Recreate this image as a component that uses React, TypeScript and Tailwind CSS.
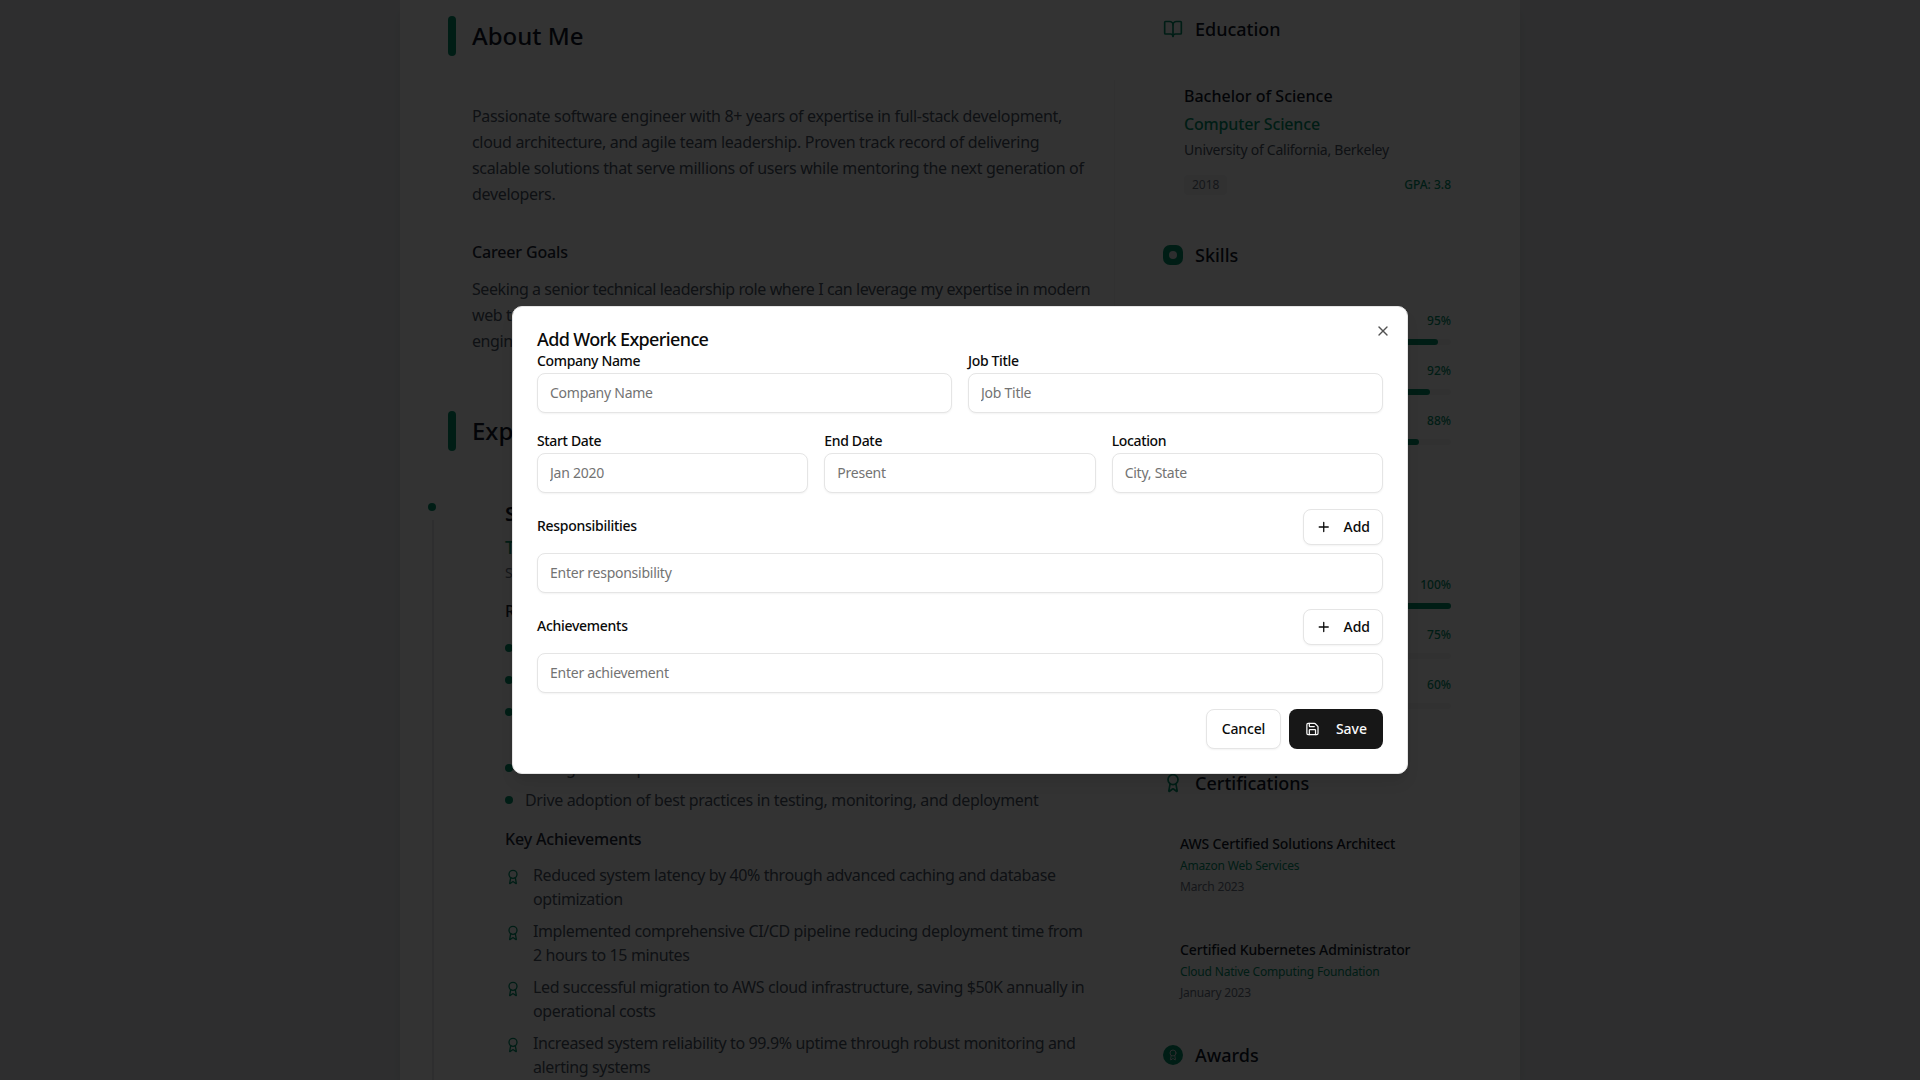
import React from 'react';
import { Award, BookOpen, Plus, Save, X } from 'lucide-react';

const fieldClass =
  'h-10 w-full rounded-lg border border-[#e5e5e5] bg-white px-3 pb-px text-sm tracking-[-0.018em] text-[#0a0a0a] placeholder:text-[#737373] shadow-xs outline-none';

const Field: React.FC<{ label: string; placeholder: string }> = ({ label, placeholder }) => (
  <div>
    <label className="mb-0.5 block h-5 text-sm leading-5 font-medium tracking-[-0.025em] text-[#0a0a0a]">{label}</label>
    <input className={fieldClass} placeholder={placeholder} />
  </div>
);

const SectionHeading: React.FC<{ title: string }> = ({ title }) => (
  <div className="flex h-10 items-center gap-4">
    <div className="h-10 w-2 rounded-full bg-[#00906a]" />
    <h2 className="text-2xl font-medium text-gray-900">{title}</h2>
  </div>
);

const SideHeading: React.FC<{ title: string; icon: React.ReactNode }> = ({ title, icon }) => (
  <div className="flex h-6 items-center gap-3">
    <div className="flex w-5 shrink-0 justify-center">{icon}</div>
    <h3 className="text-lg font-medium text-gray-900">{title}</h3>
  </div>
);

const SkillBar: React.FC<{ name: string; level: number }> = ({ name, level }) => (
  <div>
    <div className="flex h-5 items-center justify-between text-xs">
      <span className="font-medium text-gray-700">{name}</span>
      <span className="font-medium text-[#00906a]">{level}%</span>
    </div>
    <div className="mt-2 h-1.5 rounded-full bg-gray-100">
      <div className="h-full rounded-full bg-[#00906a]" style={{ width: `${level}%` }} />
    </div>
  </div>
);

const CertCard: React.FC<{ title: string; issuer: string; date: string }> = ({ title, issuer, date }) => (
  <div className="p-[17px]">
    <p className="h-5 text-sm leading-5 font-medium tracking-[-0.01em] text-gray-900">{title}</p>
    <p className="mt-0.5 h-5 text-xs leading-5 tracking-[-0.016em] text-[#00906a]">{issuer}</p>
    <p className="mt-px h-5 text-xs leading-5 tracking-[-0.016em] text-gray-500">{date}</p>
  </div>
);

const bullets = [
  'Lead a team of engineers building distributed web platforms',
  'Architect microservices on cloud infrastructure',
  'Partner with product and design to define the technical roadmap and guide delivery across multiple teams',
  'Manage team sprints',
  'Drive adoption of best practices in testing, monitoring, and deployment',
];

const achievements = [
  'Reduced system latency by 40% through advanced caching and database optimization',
  'Implemented comprehensive CI/CD pipeline reducing deployment time from 2 hours to 15 minutes',
  'Led successful migration to AWS cloud infrastructure, saving $50K annually in operational costs',
  'Increased system reliability to 99.9% uptime through robust monitoring and alerting systems',
];

export default function App() {
  return (
    <div className="relative h-screen overflow-hidden bg-gray-200 font-['Noto_Sans',sans-serif]">
      {/* Resume page, scrolled */}
      <div className="mx-auto flex h-full w-[1120px] gap-[48px] bg-white pt-4 pl-12 shadow-lg">
        <main className="w-[667px] shrink-0">
          <SectionHeading title="About Me" />
          <div className="mt-6 h-[298px] border-r border-gray-100 py-[23px] pr-3 pl-6">
            <p className="pr-[6px] leading-[26px] tracking-[-0.02em] text-gray-600">
              Passionate software engineer with 8+ years of expertise in full-stack development, cloud architecture,
              and agile team leadership. Proven track record of delivering scalable solutions that serve millions of
              users while mentoring the next generation of developers.
            </p>
            <h4 className="mt-[33px] font-medium tracking-[-0.01em] text-gray-800">Career Goals</h4>
            <p className="mt-3 leading-[26px] tracking-[-0.026em] text-gray-600">
              Seeking a senior technical leadership role where I can leverage my expertise in modern web technologies
              to drive innovation, mentor talent, and build high-performing engineering teams.
            </p>
          </div>
          <div className="mt-[33px]">
            <SectionHeading title="Experience" />
          </div>

          <div className="relative mt-[49px] pl-[57px]">
            <div className="absolute top-[3px] left-[-20px] h-2 w-2 rounded-full bg-[#00906a]" />
            <div className="absolute top-5 bottom-[-400px] left-[-16px] w-0.5 bg-gray-200" />
            <h3 className="text-xl leading-7 font-semibold text-gray-900">Senior Software Engineer</h3>
            <p className="mt-[5px] text-lg leading-7 font-medium text-[#00906a]">TechCorp Solutions</p>
            <p className="mt-0.5 text-sm leading-5 text-gray-500">San Francisco, CA</p>
            <h4 className="mt-4 font-medium tracking-[-0.01em] text-gray-800">Responsibilities</h4>
            <ul className="mt-[13px] flex flex-col gap-2">
              {bullets.map((item) => (
                <li key={item} className="flex leading-6 tracking-[-0.021em] text-gray-600">
                  <span className="mt-2 mr-3 h-2 w-2 shrink-0 rounded-full bg-[#00906a]" />
                  <span>{item}</span>
                </li>
              ))}
            </ul>
            <h4 className="mt-[15px] font-medium tracking-[-0.01em] text-gray-800">Key Achievements</h4>
            <ul className="mt-3 flex flex-col gap-2">
              {achievements.map((item) => (
                <li key={item} className="flex gap-3 pr-[22px] leading-6 tracking-[-0.024em] text-gray-600">
                  <Award className="mt-[6px] h-4 w-4 shrink-0 text-[#00906a]" />
                  <span>{item}</span>
                </li>
              ))}
            </ul>
          </div>
        </main>

        <aside className="mt-px w-[309px] shrink-0">
          <SideHeading title="Education" icon={<BookOpen className="h-5 w-5 text-[#00906a]" />} />
          <div className="mt-[22px] px-[21px] py-[21px]">
            <p className="font-medium text-gray-900">Bachelor of Science</p>
            <p className="mt-1 font-medium tracking-[-0.01em] text-[#00906a]">Computer Science</p>
            <p className="mt-1 text-sm tracking-[-0.018em] text-gray-600">University of California, Berkeley</p>
            <div className="mt-[15px] flex items-center justify-between text-xs">
              <span className="rounded bg-gray-100 px-2 py-0.5 text-gray-500">2018</span>
              <span className="font-medium text-[#00906a]">GPA: 3.8</span>
            </div>
          </div>

          <div className="mt-[27px]">
            <SideHeading
              title="Skills"
              icon={
                <div className="flex h-5 w-5 items-center justify-center rounded-[7px] bg-[#00906a]">
                  <div className="h-2 w-2 rounded-full bg-gray-200" />
                </div>
              }
            />
          </div>
          <div className="mt-[44px] flex flex-col gap-4 px-[21px]">
            <SkillBar name="JavaScript / TypeScript" level={95} />
            <SkillBar name="React / Next.js" level={92} />
            <SkillBar name="Node.js" level={88} />
          </div>
          <div className="mt-[130px] flex flex-col gap-4 px-[21px]">
            <SkillBar name="AWS" level={100} />
            <SkillBar name="Docker" level={75} />
            <SkillBar name="Kubernetes" level={60} />
          </div>

          <div className="mt-[62px]">
            <SideHeading title="Certifications" icon={<Award className="h-5 w-5 text-[#00906a]" />} />
          </div>
          <div className="mt-[22px] flex flex-col gap-[9px]">
            <CertCard title="AWS Certified Solutions Architect" issuer="Amazon Web Services" date="March 2023" />
            <CertCard
              title="Certified Kubernetes Administrator"
              issuer="Cloud Native Computing Foundation"
              date="January 2023"
            />
          </div>
          <div className="mt-[23px]">
            <SideHeading
              title="Awards"
              icon={
                <div className="flex h-5 w-5 items-center justify-center rounded-full bg-[#00906a]">
                  <Award className="h-3 w-3 text-gray-300" />
                </div>
              }
            />
          </div>
        </aside>
      </div>

      {/* Dialog backdrop */}
      <div className="absolute inset-0 bg-black/80" />

      <div className="absolute top-[306px] left-[512px] w-[896px] rounded-[10px] border border-[#e5e5e5] bg-white p-6 shadow-lg">
        <button className="absolute top-4 right-4 text-[#0a0a0a] opacity-70">
          <X className="h-4 w-4" />
        </button>
        <h2 className="h-5 text-lg leading-4 font-medium tracking-[-0.035em] text-[#0a0a0a]">Add Work Experience</h2>

        <div className="grid grid-cols-2 gap-4">
          <Field label="Company Name" placeholder="Company Name" />
          <Field label="Job Title" placeholder="Job Title" />
        </div>
        <div className="mt-[18px] grid grid-cols-3 gap-4">
          <Field label="Start Date" placeholder="Jan 2020" />
          <Field label="End Date" placeholder="Present" />
          <Field label="Location" placeholder="City, State" />
        </div>

        <div className="mt-4 flex items-center justify-between">
          <label className="pb-0.5 text-sm font-medium tracking-[-0.02em] text-[#0a0a0a]">Responsibilities</label>
          <button className="flex h-9 w-20 items-center gap-3 rounded-lg border border-[#e5e5e5] bg-white px-3 pb-px text-sm font-medium text-[#0a0a0a] shadow-xs">
            <Plus className="h-4 w-4" />
            Add
          </button>
        </div>
        <input className={`mt-2 ${fieldClass}`} placeholder="Enter responsibility" />

        <div className="mt-4 flex items-center justify-between">
          <label className="pb-0.5 text-sm font-medium tracking-[-0.02em] text-[#0a0a0a]">Achievements</label>
          <button className="flex h-9 w-20 items-center gap-3 rounded-lg border border-[#e5e5e5] bg-white px-3 pb-px text-sm font-medium text-[#0a0a0a] shadow-xs">
            <Plus className="h-4 w-4" />
            Add
          </button>
        </div>
        <input className={`mt-2 ${fieldClass}`} placeholder="Enter achievement" />

        <div className="mt-4 flex justify-end gap-2">
          <button className="h-10 w-[75px] rounded-lg border border-[#e5e5e5] bg-white pb-px text-sm font-medium tracking-[-0.01em] text-[#0a0a0a] shadow-xs">
            Cancel
          </button>
          <button className="flex h-10 w-[94px] items-center gap-4 rounded-lg bg-[#171717] px-4 text-sm font-medium text-[#fafafa]">
            <Save className="h-4 w-4" />
            <span className="pb-px">Save</span>
          </button>
        </div>
      </div>
    </div>
  );
}
